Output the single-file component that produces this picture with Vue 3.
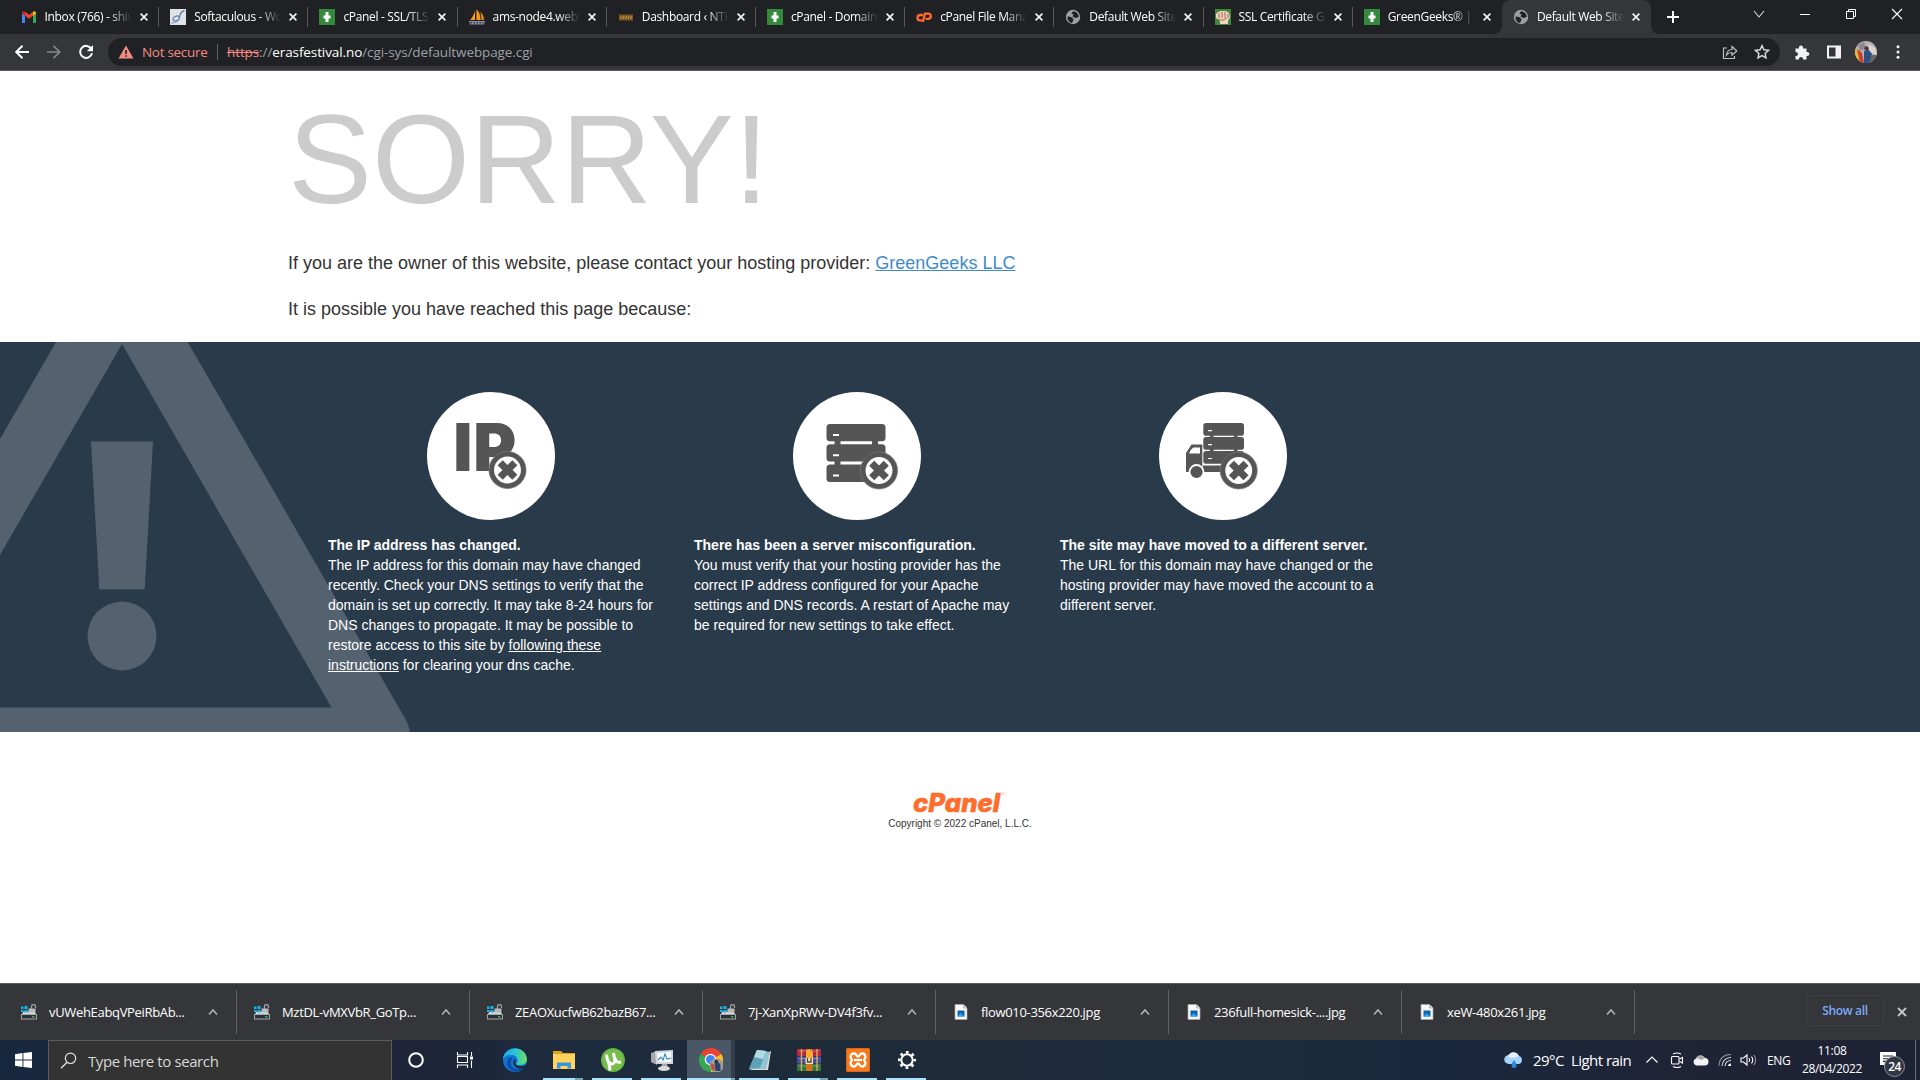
<script setup>
const tabs = [
  { icon: 'gmail', title: 'Inbox (766) - shivam' },
  { icon: 'soft', title: 'Softaculous - WordPress' },
  { icon: 'green', title: 'cPanel - SSL/TLS Status' },
  { icon: 'pma', title: 'ams-node4.webhost' },
  { icon: 'dash', title: 'Dashboard ‹ NTH — Word' },
  { icon: 'green', title: 'cPanel - Domains' },
  { icon: 'cp', title: 'cPanel File Manager' },
  { icon: 'globe', title: 'Default Web Site Page' },
  { icon: 'fist', title: 'SSL Certificate Generator' },
  { icon: 'green', title: 'GreenGeeks® | Login' },
  { icon: 'globe', title: 'Default Web Site Page', active: true },
]

const downloads = [
  { icon: 'drive', name: 'vUWehEabqVPeiRbAb...' },
  { icon: 'drive', name: 'MztDL-vMXVbR_GoTp...' },
  { icon: 'drive', name: 'ZEAOXucfwB62bazB67...' },
  { icon: 'drive', name: '7j-XanXpRWv-DV4f3fv...' },
  { icon: 'image', name: 'flow010-356x220.jpg' },
  { icon: 'image', name: '236full-homesick-....jpg' },
  { icon: 'image', name: 'xeW-480x261.jpg' },
]

const apps = [
  { id: 'edge' },
  { id: 'folder', open: true, multi: true },
  { id: 'torrent', open: true },
  { id: 'monitor', open: true },
  { id: 'chrome', open: true, multi: true, active: true },
  { id: 'notepad', open: true },
  { id: 'winrar', open: true, multi: true },
  { id: 'xampp', open: true },
  { id: 'gear', open: true },
]
</script>

<template>
  <div class="screen">
    <svg class="defs" width="0" height="0">
      <symbol id="badge" viewBox="0 0 40 40">
        <circle cx="20" cy="20" r="19" fill="#555" stroke="#777" stroke-width=".8" />
        <circle cx="20" cy="20" r="13.8" fill="#fff" />
        <path d="M12.500 12.500L27.500 27.500M27.500 12.500L12.500 27.500" stroke="#555" stroke-width="7.400" />
      </symbol>
    </svg>

    <header class="tabstrip">
      <div class="tabs">
        <div v-for="(t, i) in tabs" :key="i" class="tab" :class="{ active: t.active, last: i === 9 }">
          <svg class="fav" width="16" height="16" viewBox="0 0 16 16">
            <template v-if="t.icon === 'gmail'">
              <path d="M1 14V4l3 2.3V14z" fill="#4285f4" />
              <path d="M12 14V6.3L15 4v10z" fill="#34a853" />
              <path d="M1 4c0-2 1.8-2.3 3-1.300V6.8L1 4.600z" fill="#c5221f" />
              <path d="M15 4c0-2-1.800-2.300-3-1.300v4.100l3-2.200z" fill="#fbbc04" />
              <path d="M4 2.800l4 3 4-3v4l-4 3-4-3z" fill="#ea4335" />
            </template>
            <template v-else-if="t.icon === 'soft'">
              <rect width="16" height="16" fill="#dfe3e8" />
              <path d="M14.500 1.500C9 3 10 8 9 10s-6 3-6 .500 4-4.500 6-3" fill="none" stroke="#5a7fa8" stroke-width="1.300" />
              <path d="M1 14c5 0 8-2 9-5" fill="none" stroke="#8a9db5" />
            </template>
            <template v-else-if="t.icon === 'green'">
              <rect width="16" height="16" fill="#35893b" />
              <path d="M8 3v10M4.500 8h7" stroke="#fff" stroke-width="3" />
            </template>
            <template v-else-if="t.icon === 'pma'">
              <path d="M6 1.500v9.500H1C3.500 9 5 5 6 1.500z" fill="#f89c0e" />
              <path d="M7.500 0c3 3 4 7 4 11h-4z" fill="#f89c0e" />
              <path d="M11.500 3c2.500 2 3.500 5 3.500 8h-2.500z" fill="#e08a10" />
              <path d="M0 12h16l-1 3.500H1z" fill="#8a8ca6" />
              <path d="M1.500 13.700h13" stroke="#35364a" stroke-width="1.500" stroke-dasharray="1.500 1.500" />
            </template>
            <template v-else-if="t.icon === 'dash'">
              <rect x="1" y="5.500" width="14" height="6" fill="#7a551f" />
              <path d="M2.500 10l1-3M5 10l1-3M7.500 10l1-3M10 10l1-3M12.500 10l1-3" stroke="#c89a4c" stroke-width="1" />
            </template>
            <template v-else-if="t.icon === 'cp'">
              <path d="M7 6H4.200a2.700 2.700 0 0 0 0 5.400H6M6.800 13L9 4.600h3.200a2.600 2.600 0 0 1 0 5.200H9.500" fill="none" stroke="#ff6c2c" stroke-width="2.300" />
            </template>
            <template v-else-if="t.icon === 'globe'">
              <circle cx="8" cy="8" r="7.200" fill="#9aa0a6" />
              <path d="M2.500 7.500l3.500.500 2.500 2-.500 2-1 2C4 13.500 2.200 10.500 2.500 7.500zM8 2.200L6.500 4.500l2 1-1 2 3 1.500 3.300-1C13.700 5 11.500 2.500 8 2.200z" fill="#202124" />
            </template>
            <template v-else>
              <rect width="16" height="16" fill="#3c8a3c" />
              <path d="M1 5l2-2 3-1 5 0 3 2 1 4-2 4v3H5v-3L1 9z" fill="#f2d3bd" />
              <path d="M4 4v5M7 3v6M10 3v6M13 5v4M3 10c4 2 6 1 9-1" fill="none" stroke="#8b5d4b" stroke-width=".900" />
            </template>
          </svg>
          <span class="title">{{ t.title }}</span>
          <svg class="x" width="8" height="8" viewBox="0 0 8 8"><path d="M.600.600l6.800 6.800M7.400.600L.600 7.400" stroke="#f1f3f4" stroke-width="1.700" /></svg>
        </div>
      </div>
      <svg class="plus" width="12" height="12" viewBox="0 0 12 12"><path d="M6 0v12M0 6h12" stroke="#fff" stroke-width="2" /></svg>
      <div class="winctl">
        <svg width="12" height="12" viewBox="0 0 12 12"><path d="M1 3l5 6 5-6" fill="none" stroke="#ddd" stroke-width="1.100" /></svg>
        <svg width="12" height="12" viewBox="0 0 12 12"><path d="M1 6.500h10" stroke="#fff" /></svg>
        <svg width="12" height="12" viewBox="0 0 12 12"><path d="M1.500 3.500h7v7h-7zM3.500 3.500v-2h7v7h-2" fill="none" stroke="#fff" /></svg>
        <svg width="12" height="12" viewBox="0 0 12 12"><path d="M1 1l10 10M11 1L1 11" stroke="#fff" stroke-width="1.100" /></svg>
      </div>
    </header>

    <div class="toolbar">
      <svg class="nav" width="16" height="16" viewBox="0 0 16 16"><path d="M15 8H2.500M8.500 1.800L2.200 8l6.300 6.200" fill="none" stroke="#fff" stroke-width="1.900" /></svg>
      <svg class="nav" width="16" height="16" viewBox="0 0 16 16"><path d="M1 8h12.500M7.500 1.800L13.800 8l-6.300 6.200" fill="none" stroke="#85878a" stroke-width="1.700" /></svg>
      <svg class="nav" width="16" height="16" viewBox="0 0 16 16"><path d="M13.200 4.600A6 6 0 1 0 14 9.300" fill="none" stroke="#fff" stroke-width="2" /><path d="M15 1v6.200H8.800z" fill="#fff" /></svg>
      <div class="omnibox">
        <svg class="warn" width="16" height="14" viewBox="0 0 16 14"><path d="M8 .500L15.500 13.500H.500z" fill="#f28b82" /><path d="M8 5v4M8 10.200v1.600" stroke="#202124" stroke-width="1.600" /></svg>
        <span class="notsecure">Not secure</span>
        <i class="bar"></i>
        <span class="url"><s>https</s>://<b>erasfestival.no</b>/cgi-sys/defaultwebpage.cgi</span>
        <svg class="share" width="16" height="16" viewBox="0 0 16 16"><path d="M5 4H1.500v10.500h11V12" fill="none" stroke="#bdc1c6" stroke-width="1.200" /><path d="M4.500 11c.500-4 2.500-5.500 5.500-5.500V2.500L14.800 7 10 11.200V8.500c-2.500 0-4 .500-5.500 2.500z" fill="none" stroke="#bdc1c6" stroke-width="1.200" /></svg>
        <svg class="star" width="16" height="16" viewBox="0 0 16 16"><path d="M8 1.600l1.900 4.200 4.600.500-3.400 3.100.900 4.500L8 11.600l-4 2.300.900-4.500L1.500 6.300l4.600-.500z" fill="none" stroke="#dadce0" stroke-width="1.400" /></svg>
      </div>
      <div class="ext">
        <svg width="16" height="16" viewBox="0 0 16 16"><path d="M1.500 4.500H5c-.800-4 4.800-4 4 0h3.500V8c3.800-.600 3.800 4.600 0 4v3.500H9c.500-3.500-4.500-3.500-4 0H1.500V12c3.300.300 3.300-4.300 0-4z" fill="#f1f3f4" /></svg>
        <svg width="16" height="16" viewBox="0 0 16 16"><path d="M1 1.500h14v13H1zM3 3.500v9h6.500v-9z" fill="#f1f3f4" fill-rule="evenodd" /></svg>
        <svg width="22" height="22" viewBox="0 0 22 22">
          <clipPath id="av"><circle cx="11" cy="11" r="11" /></clipPath>
          <g clip-path="url(#av)">
            <rect width="22" height="22" fill="#b9b2b4" /><path d="M0 8l4 1 4 13H0z" fill="#e6bb3c" /><path d="M2 8l5 4 2 10H5z" fill="#c8402c" />
            <path d="M13 3l7 4 2 7-8-3z" fill="#ddd4cf" /><path d="M3 4l6-3 2 6-6 3z" fill="#8f8a92" /><path d="M9 10l5-1 3 4-2 9H9z" fill="#2c4f86" /><circle cx="11.500" cy="7.500" r="2.200" fill="#49343a" /><path d="M16 14h6v8h-7z" fill="#71645f" />
          </g>
        </svg>
        <svg width="16" height="16" viewBox="0 0 16 16"><circle cx="8" cy="2.800" r="1.500" fill="#f1f3f4" /><circle cx="8" cy="8" r="1.500" fill="#f1f3f4" /><circle cx="8" cy="13.200" r="1.500" fill="#f1f3f4" /></svg>
      </div>
    </div>

    <main class="page">
      <section class="intro">
        <h1>SORRY!</h1>
        <p>If you are the owner of this website, please contact your hosting provider: <a>GreenGeeks LLC</a></p>
        <p>It is possible you have reached this page because:</p>
      </section>

      <section class="reasons">
        <svg class="alert" width="412" height="390" viewBox="0 0 412 390">
          <g fill="#54616e">
            <path d="M56 0H187.700L406 378Q409 384 410 390H0V365.500H331.500L122 2 0 213V97z" />
            <path d="M91 99.500h62l-8.300 148H99.300z" />
            <circle cx="122" cy="294" r="34.500" />
          </g>
        </svg>
        <div class="cols">
          <article>
            <svg width="128" height="128" viewBox="0 0 128 128">
              <circle cx="64" cy="64" r="64" fill="#fff" />
              <g class="ip"><text x="26.200" y="79" textLength="20">I</text><text x="46.300" y="79" textLength="43" lengthAdjust="spacingAndGlyphs">P</text></g>
              <use href="#badge" x="61" y="58.500" width="39" height="39" />
            </svg>
            <h2>The IP address has changed.</h2>
            <p>The IP address for this domain may have changed recently. Check your DNS settings to verify that the domain is set up correctly. It may take 8-24 hours for DNS changes to propagate. It may be possible to restore access to this site by <a>following these instructions</a> for clearing your dns cache.</p>
          </article>
          <article>
            <svg width="128" height="128" viewBox="0 0 128 128">
              <circle cx="64" cy="64" r="64" fill="#fff" />
              <g fill="#555">
                <rect x="33.500" y="32" width="59" height="17.300" rx="3.500" /><rect x="33.500" y="52.200" width="59" height="17.300" rx="3.500" /><rect x="33.500" y="72.400" width="59" height="17.600" rx="3.500" />
                <path d="M41.500 48h6v26h-6zM79 48h6v26h-6z" />
              </g>
              <path d="M40 43h6M40 63.200h6M40 83.400h6" stroke="#fff" stroke-width="2" />
              <use href="#badge" x="66.500" y="59" width="39" height="39" />
            </svg>
            <h2>There has been a server misconfiguration.</h2>
            <p>You must verify that your hosting provider has the correct IP address configured for your Apache settings and DNS records. A restart of Apache may be required for new settings to take effect.</p>
          </article>
          <article>
            <svg width="128" height="128" viewBox="0 0 128 128">
              <circle cx="64" cy="64" r="64" fill="#fff" />
              <g fill="#555">
                <rect x="44.300" y="31" width="40.700" height="12.700" rx="2.800" /><rect x="44.300" y="45" width="40.700" height="12.700" rx="2.800" /><rect x="44.300" y="59" width="40.700" height="12.700" rx="2.800" />
                <path d="M51 43h3.500v18H51zM75 43h3.500v18H75zM44 73.500h22v6.500H44z" />
                <path fill-rule="evenodd" d="M27 80V61l5.500-8.500H43.300V80zM30 61.500h11V55.500h-6.500Q31 57.500 30 61.500z" />
              </g>
              <path d="M49 38.700h4M49 52.600h4M49 66.500h4" stroke="#fff" stroke-width="1.200" />
              <circle cx="37.500" cy="80" r="7" fill="#555" stroke="#fff" stroke-width="1.800" />
              <use href="#badge" x="60.200" y="59" width="39" height="39" />
            </svg>
            <h2>The site may have moved to a different server.</h2>
            <p>The URL for this domain may have changed or the hosting provider may have moved the account to a different server.</p>
          </article>
        </div>
      </section>

      <footer>
        <svg class="logo" width="92" height="26" viewBox="0 0 92 26">
          <text x="0" y="23" textLength="87" lengthAdjust="spacingAndGlyphs">cPanel</text>
          <circle cx="90.300" cy="4.500" r="1.100" fill="none" stroke="#ffb597" stroke-width=".600" />
        </svg>
        <small>Copyright © 2022 cPanel, L.L.C.</small>
      </footer>
    </main>

    <div class="shelf">
      <div v-for="d in downloads" :key="d.name" class="dl">
        <svg width="16" height="16" viewBox="0 0 16 16">
          <template v-if="d.icon === 'drive'">
            <path d="M1 10l1.500-2.500h11L15 10z" fill="#d5d8da" /><rect x="0" y="10" width="16" height="5.500" rx=".500" fill="#a3a8ab" /><rect x="1" y="11" width="14" height="3.500" fill="#2b3135" />
            <rect x="11" y="12.200" width="2.500" height="1.200" fill="#3fd64a" />
            <path d="M0 2.500h2.500V5H0zM3.500 2H6.500v3h-3zM0 6h2.500v2H0zM3.500 6h3v2.500h-3z" fill="#16b4ee" />
            <path d="M10.500 5V2.500a2 2 0 0 1 4 0V4" fill="none" stroke="#9a9fa3" stroke-width="1.300" /><rect x="7.500" y="4.500" width="7" height="4" fill="#b5babd" />
          </template>
          <template v-else>
            <path d="M2 .500h8.500L14 4v11.500H2z" fill="#fafafa" stroke="#a8a8a8" stroke-width=".700" /><path d="M10.500.500V4H14" fill="#ddd" stroke="#999" stroke-width=".600" />
            <rect x="4.500" y="6.500" width="7" height="6" fill="#0d62b5" /><path d="M4.500 12.500l3-3.500 4 3.500z" fill="#2da6e8" />
          </template>
        </svg>
        <span>{{ d.name }}</span>
        <svg class="caret" width="10" height="10" viewBox="0 0 10 10"><path d="M1 7.500L5 3l4 4.500" fill="none" stroke="#b4b6b9" stroke-width="1.500" /></svg>
      </div>
      <span class="showall">Show all</span>
      <svg class="shut" width="10" height="10" viewBox="0 0 10 10"><path d="M1 1l8 8M9 1L1 9" stroke="#c4c7ca" stroke-width="1.800" /></svg>
    </div>

    <div class="taskbar">
      <div class="start"><svg width="17" height="16" viewBox="0 0 17 16"><path d="M0 2.200L7.500 1.100V7.600H0zM8.400 1L17 0v7.600H8.400zM0 8.400h7.500v6.500L0 13.800zM8.400 8.400H17V16l-8.600-1z" fill="#fff" /></svg></div>
      <div class="search">
        <svg width="17" height="17" viewBox="0 0 17 17"><circle cx="10.500" cy="6.300" r="5.200" fill="none" stroke="#e4e4e4" stroke-width="1.200" /><path d="M7 10.200L1 16.200" stroke="#e4e4e4" stroke-width="1.300" /></svg>
        <span>Type here to search</span>
      </div>
      <div class="app cortana"><svg width="24" height="24" viewBox="0 0 24 24"><circle cx="12" cy="12" r="6.800" fill="none" stroke="#fff" stroke-width="2" /></svg></div>
      <div class="app"><svg width="24" height="24" viewBox="0 0 24 24"><path d="M4.500 4v3h10V4M4.500 20v-3h10v3M4.500 8.500h10v6h-10zM18.500 4v4M18.500 12.500V20" fill="none" stroke="#fff" stroke-width="1.100" /><rect x="17" y="8.500" width="3" height="3" fill="#fff" /></svg></div>
      <div v-for="a in apps" :key="a.id" class="app" :class="[{ open: a.open, multi: a.multi, active: a.active }, a.id]">
        <svg width="24" height="24" viewBox="0 0 24 24">
          <template v-if="a.id === 'edge'">
            <linearGradient id="e1" x1="0" x2="1"><stop offset="0" stop-color="#26a7e8" /><stop offset=".500" stop-color="#2bc3d6" /><stop offset="1" stop-color="#6fe05c" /></linearGradient>
            <circle cx="12" cy="12" r="12" fill="#1273d0" />
            <path d="M0 11C1-2 22-4 24 11c0 5-4 6-8 6-3 0-3-1-2-2.500C16 11 13 7 9 7c-5 0-8 2-9 4z" fill="url(#e1)" />
            <path d="M9 11c-3 5 0 10 6 10 3 0 5-1 7-2-5 8-18 5-18-4 0-4 3-6 6-6z" fill="#0c4fa6" />
            <path d="M12.500 13c-1.500 4 3 6.500 9.500 4.500l2-1.500v3l-2.500 1.500C15 22 9 18 10.500 13c.500-2 3-2 2 0z" fill="#1d2b3e" />
          </template>
          <template v-else-if="a.id === 'folder'">
            <path d="M1 3h8l2 2h12v3H1z" fill="#e3a11b" /><path d="M1 6h22v15H1z" fill="#ffd35e" /><path d="M5 20.500v-6h14v6h-3.500V18h-7v2.500z" fill="#3a95dd" />
          </template>
          <template v-else-if="a.id === 'torrent'">
            <circle cx="12" cy="12" r="12" fill="#68b245" /><circle cx="12" cy="12" r="10.500" fill="#76bd4c" />
            <path d="M5.500 6.500q0 4 2.500 9l1 7" fill="none" stroke="#fff" stroke-width="3" />
            <path d="M8 14q4 4.500 6-1L12.500 5M14 10q1 5.500 6 4" fill="none" stroke="#fff" stroke-width="3" />
          </template>
          <template v-else-if="a.id === 'monitor'">
            <path d="M1 5l6-2v14l-6-3z" fill="#a4a8aa" /><path d="M5 3l18-1v14L6 16z" fill="#d3d6d8" /><path d="M7 5l14-1v10H8z" fill="#f4fafd" />
            <path d="M8 12l3-3 2 3 2-6 2 5 4-1" fill="none" stroke="#3187bb" stroke-width="1.100" /><path d="M12 16h5l1 3h-7z" fill="#a4a8aa" /><ellipse cx="14" cy="20.500" rx="6" ry="2.500" fill="#d8dadb" />
          </template>
          <template v-else-if="a.id === 'chrome'">
            <path d="M12 12L1.600 6A12 12 0 0 1 22.400 6z" fill="#ea4335" /><path d="M12 12L1.600 6A12 12 0 0 0 12 24z" fill="#34a853" /><path d="M12 12l10.400-6A12 12 0 0 1 12 24z" fill="#fbc116" />
            <circle cx="11.500" cy="11.500" r="5.800" fill="#fff" /><circle cx="11.500" cy="11.500" r="4.500" fill="#4285f4" />
            <circle cx="17.500" cy="17.500" r="7" fill="#a79b96" /><path d="M15.500 14l3-1 3 4v6h-5z" fill="#27446e" /><circle cx="17.300" cy="13.300" r="1.600" fill="#342a31" /><path d="M11.500 15l4 2v6l-3-2z" fill="#bb4b37" />
          </template>
          <template v-else-if="a.id === 'notepad'">
            <path d="M9 2l13 2-3 17H1z" fill="#8ec5d6" /><path d="M9 2l9 1-6 17-11 1z" fill="#5da2b8" /><path d="M9 2l9 1-3 8-9-2z" fill="#b5dbe4" /><path d="M22 3l1 0-3 19H4l-3-1h17z" fill="#dedcd0" />
          </template>
          <template v-else-if="a.id === 'winrar'">
            <rect y="1" width="24" height="7" fill="#ba2440" /><rect y="8.500" width="24" height="7" fill="#4a4c9c" /><rect y="16" width="24" height="7" fill="#32763d" />
            <path d="M2 3h20M2 10.500h20M2 18h20" stroke="#ffffff55" stroke-width="1.200" /><path d="M4.500 1v22M20 1v22" stroke="#d1ae5d" stroke-width="1.400" />
            <rect x="9" y="1" width="6.500" height="22" fill="#d57319" /><path d="M9 3l3-2 4 3v6H9z" fill="#f5ae2f" /><rect x="8.500" y="10" width="7.500" height="6" fill="#eee4c4" /><path d="M10.500 10v4h3.500v-4" fill="none" stroke="#53432c" stroke-width="1.300" />
          </template>
          <template v-else-if="a.id === 'xampp'">
            <rect width="24" height="24" rx="2" fill="#f57a20" /><rect x=".500" y=".500" width="23" height="23" rx="2" fill="none" stroke="#d8651a" />
            <path d="M6 12C3.500 9.500 4.500 5.500 8 5.500c3 0 2 3 4 3s1-3 4-3c3.500 0 4.500 4 2 6.500 2.500 2.500 1.500 6.500-2 6.500-3 0-2-3-4-3s-1 3-4 3c-3.500 0-4.500-4-2-6.500z" fill="none" stroke="#fff" stroke-width="2.300" /><path d="M8 12h8" stroke="#fff" stroke-width="2.200" />
          </template>
          <template v-else>
            <circle cx="12" cy="12" r="5.700" fill="none" stroke="#fff" stroke-width="2" />
            <circle cx="12" cy="12" r="7.700" fill="none" stroke="#fff" stroke-width="2.600" stroke-dasharray="2.700 3.347" stroke-dashoffset="1.350" />
          </template>
        </svg>
      </div>
      <div class="tray">
        <svg class="wx" width="20" height="20" viewBox="0 0 20 20"><path d="M5 14a4.500 4.500 0 0 1-.500-9A6 6 0 0 1 15 6a4.200 4.200 0 0 1 0 8z" fill="#a9d3fa" /><path d="M4.500 5A6 6 0 0 1 15 6c-3 1-6 3-10.500 1z" fill="#e3f1ff" /><path d="M10 10c2 3 2.500 4 2.500 5.500a2.500 2.500 0 0 1-5 0C7.500 14 8 13 10 10z" fill="#2b86de" /></svg>
        <span class="temp">29°C</span><span class="cond">Light rain</span>
        <svg class="t1" width="14" height="14" viewBox="0 0 14 14"><path d="M1.500 9.500L7 4l5.500 5.500" fill="none" stroke="#fff" stroke-width="1.200" /></svg>
        <svg class="t2" width="14" height="16" viewBox="0 0 14 16"><rect x="1.500" y="4.500" width="7.500" height="7.500" rx="1" fill="none" stroke="#fff" stroke-width="1.100" /><path d="M9.500 7l3-1.500v5.500l-3-1.500M3 2q4-2 8 0M3 14.500q4 2 8 0" fill="none" stroke="#fff" stroke-width="1.100" /></svg>
        <svg class="t3" width="17" height="12" viewBox="0 0 17 12"><path d="M4 11.500a3.700 3.700 0 0 1 0-7A5 5 0 0 1 13 4a3.800 3.800 0 0 1 .500 7.500z" fill="#f3f3f3" /><path d="M4 4a5 5 0 0 1 9 0l-3 2z" fill="#aaa" /></svg>
        <svg class="t4" width="14" height="14" viewBox="0 0 14 14"><g fill="none" stroke="#ddd" stroke-width="1.100"><path d="M1 13C1 6 6 1 13 1.500" opacity=".600" /><path d="M4 13c0-5 4-8.500 9-8.500M7 13c0-3 2.500-5.500 6-5.500" /></g><path d="M10 13q0-2.500 3-2.500V13z" fill="#fff" /></svg>
        <svg class="t5" width="17" height="14" viewBox="0 0 17 14"><g fill="none" stroke="#fff" stroke-width="1.100"><path d="M1 5h2.500L7 2v10L3.500 9H1zM9 5q1.500 2 0 4M11.500 3.500q2.500 3.500 0 7" /><path d="M14 2q3.300 5 0 10" opacity=".500" /></g></svg>
        <span class="lang">ENG</span>
        <div class="clock"><span>11:08</span><span>28/04/2022</span></div>
        <div class="notif">
          <svg width="16" height="16" viewBox="0 0 16 16"><path d="M0 0h16v13H7l-3 3v-3H0z" fill="#fff" /><path d="M3 4h10M3 6.700h10M3 9.400h7" stroke="#1e2234" stroke-width="1.100" /></svg>
          <b>24</b>
        </div>
        <i class="peek"></i>
      </div>
    </div>
  </div>
</template>

<style>
body { margin: 0; overflow: hidden; }
</style>

<style scoped>
* { box-sizing: border-box; }
.screen { width: 1920px; height: 1080px; display: flex; flex-direction: column; background: #fff; font-family: "Open Sans", "Noto Sans", sans-serif; overflow: hidden; }
.defs { position: absolute; }
svg { flex: none; display: block; }

.tabstrip { height: 34px; flex: none; background: #202124; display: flex; align-items: center; }
.tabs { display: flex; height: 34px; padding-left: 10px; }
.tab { width: 149.200px; height: 34px; display: flex; align-items: center; padding: 0 11px 0 11px; position: relative; }
.tab:first-child { padding-left: 10.500px; }
.tab:not(.active):not(.last)::after { content: ""; position: absolute; right: 0; top: 7px; width: 1px; height: 20px; background: #55575b; }
.fav { margin-right: 8px; }
.title { width: 87px; white-space: nowrap; overflow: hidden; color: #fff; font-size: 12px; letter-spacing: -.33px; line-height: 18px; -webkit-mask-image: linear-gradient(90deg, #000 64px, transparent 87px); mask-image: linear-gradient(90deg, #000 64px, transparent 87px); }
.x { margin-left: 8px; }
.tab.active { background: #35363a; border-radius: 8px 8px 0 0; }
.tab.active::before, .tab.active::after { content: ""; position: absolute; bottom: 0; width: 8px; height: 8px; }
.tab.active::before { left: -8px; background: radial-gradient(circle at 0 0, #202124 7.500px, #35363a 8px); }
.tab.active::after { right: -8px; background: radial-gradient(circle at 100% 0, #202124 7.500px, #35363a 8px); }
.plus { margin-left: 16px; }
.winctl { margin-left: auto; display: flex; gap: 34px; padding: 0 17px 6px 0; }

.toolbar { height: 36px; flex: none; background: #35363a; display: flex; align-items: center; padding-left: 14px; }
.nav { margin-right: 16px; }
.omnibox { margin-left: -2px; width: 1672px; height: 28px; border-radius: 14px; background: #202124; display: flex; align-items: center; padding: 0 10px 0 10px; font-size: 13.500px; }
.notsecure { margin-left: 8px; width: 67px; color: #f28b82; letter-spacing: -.3px; white-space: nowrap; }
.bar { width: 1px; height: 16px; background: #5f6368; margin: 0 9px 0 8px; }
.url { color: #9aa0a6; letter-spacing: -.1px; white-space: nowrap; }
.url s { color: #f28b82; }
.url b { color: #fff; font-weight: 400; }
.share { margin-left: auto; margin-right: 16px; }
.ext { display: flex; align-items: center; padding-left: 14px; gap: 16px; }
.ext svg:nth-child(3) { margin-left: -3px; }
.ext svg:nth-child(4) { margin-left: -3px; }

.page { height: 913px; flex: none; border-top: 1px solid #5d565e; background: #fff; display: flex; flex-direction: column; font-family: "Liberation Sans", Arial, sans-serif; }
.intro { height: 271px; padding-left: 288px; color: #333; }
.intro h1 { margin: 0; padding-top: 26px; font-size: 126px; line-height: 126px; font-weight: 400; color: #ccc; }
.intro p { margin: 0; font-size: 18px; line-height: 26px; }
.intro h1 + p { margin-top: 27px; }
.intro p + p { margin-top: 20px; }
.intro a { color: #428bca; text-decoration: underline; }
.reasons { height: 390px; background: #293a4a; position: relative; }
.alert { position: absolute; left: 0; top: 0; }
.cols { position: relative; display: flex; padding: 50px 0 0 308px; }
article { width: 366px; padding: 0 20px; color: #fff; font-size: 14px; line-height: 20px; }
article > svg { margin: 0 auto 15px; }
article h2 { margin: 0; font-size: 14px; line-height: 20px; font-weight: 700; white-space: nowrap; }
article p { margin: 0; }
article a { text-decoration: underline; }
.ip { font-family: Inter, sans-serif; font-weight: 900; font-size: 66px; fill: #555; }
footer { padding-top: 57px; display: flex; flex-direction: column; align-items: center; color: #333; }
.logo { margin-right: 2px; }
.logo text { font-family: Inter, "Open Sans", sans-serif; font-style: italic; font-weight: 800; font-size: 26px; fill: #ff6c2c; stroke: #ff6c2c; stroke-width: .600px; }
footer small { font-size: 10px; line-height: 12px; margin-top: 3px; }

.shelf { height: 57px; flex: none; background: #35363a; border-top: 1px solid #5b5c60; display: flex; align-items: center; padding-left: 4px; }
.dl { width: 233px; height: 44px; border-right: 1px solid #5f6064; display: flex; align-items: center; padding-left: 16.500px; color: #fff; font-size: 13px; letter-spacing: -.33px; white-space: nowrap; }
.dl span { margin-left: 12.500px; }
.caret { margin-left: auto; margin-right: 18px; }
.showall { margin-left: 171px; width: 78px; height: 31px; margin-top: -3px; border: 1px solid #404146; border-radius: 4px; color: #7baaf7; font-size: 12px; font-weight: 600; letter-spacing: -.3px; display: flex; align-items: center; justify-content: center; }
.shut { margin-left: 13px; }

.taskbar { height: 40px; flex: none; display: flex; background: linear-gradient(90deg, #17283e 0, #20253a 350px, #1e2539 450px, #1c2b3e 560px, #1e2b39 800px, #1b2a3c 1200px, #1a283d 1450px, #202336 1700px, #1e2235 1920px); color: #fff; }
.start { width: 48px; display: flex; align-items: center; padding-left: 15px; }
.search { width: 344px; background: #333; border: 1px solid #5d5d5d; border-bottom: 0; display: flex; align-items: center; padding-left: 11px; }
.search span { margin-left: 11px; font-size: 15px; letter-spacing: -.4px; color: #d8d8d8; }
.app { width: 49px; display: flex; align-items: center; justify-content: center; position: relative; }
.cortana { margin-left: -1px; }
.edge { margin-left: 1px; }
.open::after { content: ""; position: absolute; bottom: 0; left: 4px; width: 40px; height: 2px; background: #a8e4fc; }
.multi::after { background: linear-gradient(90deg, #a8e4fc 32px, #7aa3b3 32px); }
.active.app { background: linear-gradient(90deg, transparent 1px, #4a5766 1px 45px, #353f4c 45px); }
.active.app::after { left: 1px; width: 48px; background: linear-gradient(90deg, #a8e4fc 44px, #7aa3b3 44px); }
.tray { margin-left: auto; display: flex; align-items: center; font-size: 15px; letter-spacing: -.55px; width: 416px; white-space: nowrap; }
.temp { width: 30px; margin-left: 9px; }
.cond { width: 58px; margin-left: 8px; }
.t1 { margin-left: 16px; }
.t2 { margin-left: 11px; }
.t3 { margin-left: 8px; }
.t4 { margin-left: 9px; }
.t5 { margin-left: 8px; }
.lang { font-size: 12px; letter-spacing: -.4px; width: 24px; margin-left: 10px; }
.clock { width: 60px; margin-left: 11px; display: flex; flex-direction: column; align-items: center; font-size: 12px; line-height: 18px; letter-spacing: -.35px; }
.notif { position: relative; margin-left: 18px; height: 16px; }
.notif b { position: absolute; left: 4px; top: 4px; width: 21px; height: 21px; border-radius: 50%; background: #333743; border: 1px solid #8b8d93; font-size: 12px; line-height: 19px; text-align: center; font-weight: 600; }
.peek { width: 1px; height: 40px; margin-left: auto; margin-right: 4px; background: #6d707c; }
</style>
